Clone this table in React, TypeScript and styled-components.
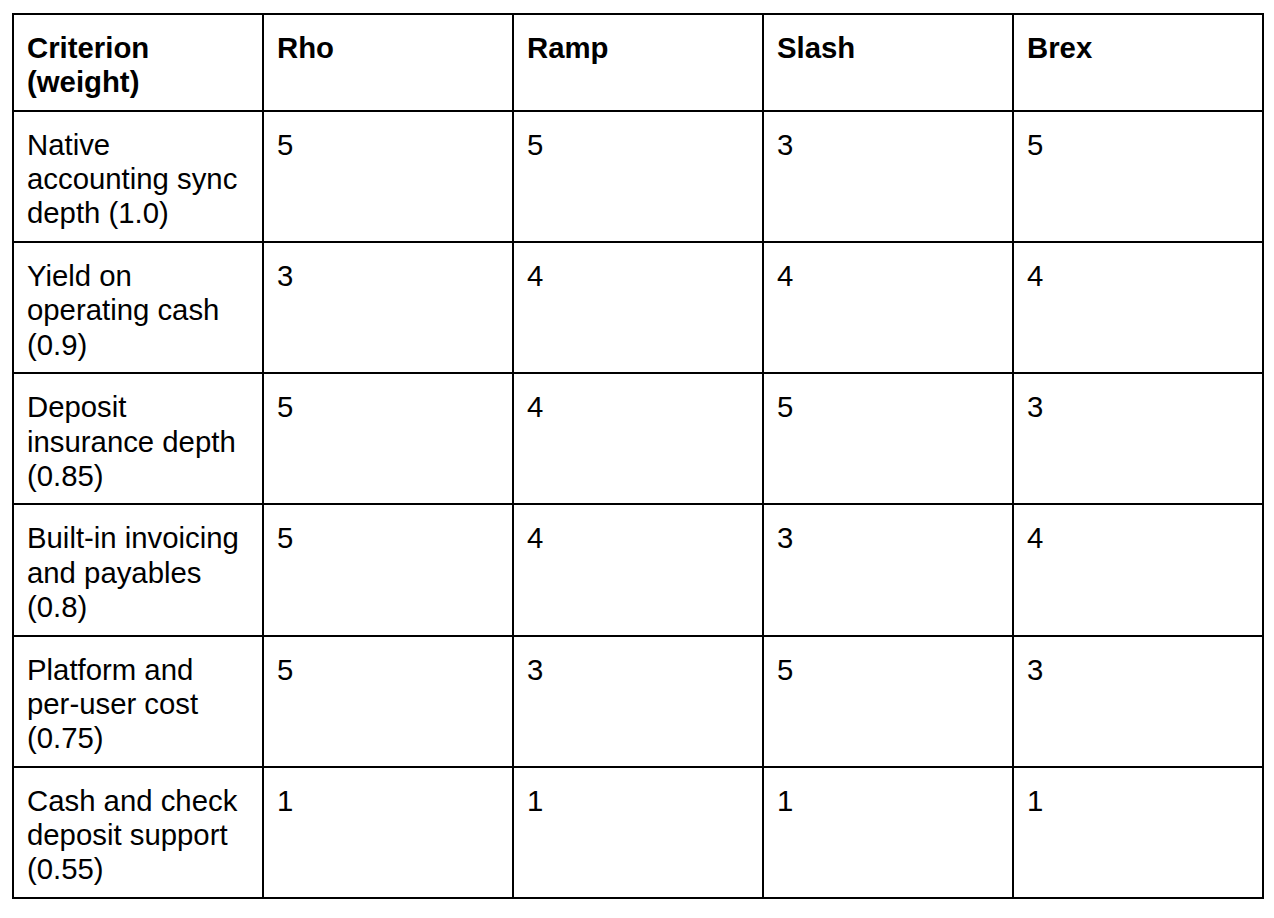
import React from 'react';
import styled, { createGlobalStyle } from 'styled-components';

const GlobalStyle = createGlobalStyle`
  html, body {
    margin: 0;
    padding: 0;
    background: #fff;
  }
  body {
    font-family: "Liberation Sans", Arial, sans-serif;
    color: #000;
  }
`;

const Page = styled.div`
  padding: 13px 12px;
`;

const Table = styled.table`
  width: 1250px;
  table-layout: fixed;
  border-collapse: collapse;
  font-size: 29.33px;
  line-height: 34.3px;
`;

const Col = styled.col`
  width: 250px;
`;

const HeadCell = styled.th`
  border: 2px solid #000;
  padding: 16px 13px 10.3px;
  text-align: left;
  vertical-align: top;
  font-weight: 700;
`;

const Cell = styled.td`
  border: 2px solid #000;
  padding: 16px 13px 10.3px;
  text-align: left;
  vertical-align: top;
  font-weight: 400;
`;

const vendors = ['Rho', 'Ramp', 'Slash', 'Brex'];

const rows: { label: string; scores: number[] }[] = [
  { label: 'Native accounting sync depth (1.0)', scores: [5, 5, 3, 5] },
  { label: 'Yield on operating cash (0.9)', scores: [3, 4, 4, 4] },
  { label: 'Deposit insurance depth (0.85)', scores: [5, 4, 5, 3] },
  { label: 'Built-in invoicing and payables (0.8)', scores: [5, 4, 3, 4] },
  { label: 'Platform and per-user cost (0.75)', scores: [5, 3, 5, 3] },
  { label: 'Cash and check deposit support (0.55)', scores: [1, 1, 1, 1] },
];

const App = () => {
  return (
    <>
      <GlobalStyle />
      <Page>
        <Table>
          <colgroup>
            {[0, 1, 2, 3, 4].map((i) => (
              <Col key={i} />
            ))}
          </colgroup>
          <thead>
            <tr>
              <HeadCell>Criterion (weight)</HeadCell>
              {vendors.map((v) => (
                <HeadCell key={v}>{v}</HeadCell>
              ))}
            </tr>
          </thead>
          <tbody>
            {rows.map((row) => (
              <tr key={row.label}>
                <Cell>{row.label}</Cell>
                {row.scores.map((s, i) => (
                  <Cell key={i}>{s}</Cell>
                ))}
              </tr>
            ))}
          </tbody>
        </Table>
      </Page>
    </>
  );
};

export default App;
